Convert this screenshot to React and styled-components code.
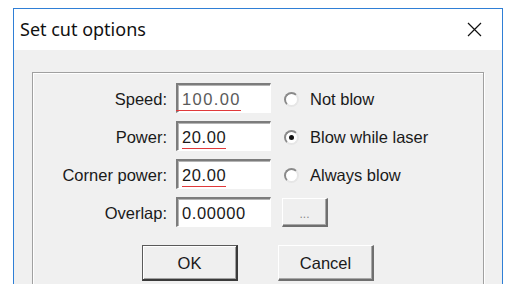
import React from "react";
import styled, { createGlobalStyle } from "styled-components";

const GlobalStyle = createGlobalStyle`
  html, body {
    margin: 0;
    padding: 0;
    background: #ffffff;
    overflow: hidden;
  }
  body {
    font-family: "Liberation Sans", Arial, sans-serif;
  }
`;

const rows = [
  { label: "Speed:", value: "100.00", faded: true, squiggle: true, radio: "Not blow" },
  { label: "Power:", value: "20.00", squiggle: true, radio: "Blow while laser", checked: true },
  { label: "Corner power:", value: "20.00", squiggle: true, radio: "Always blow" },
  { label: "Overlap:", value: "0.00000", more: true },
];

export default function App() {
  return (
    <>
      <GlobalStyle />
      <Window>
        <TitleBar>
          <Title>Set cut options</Title>
          <CloseButton>
            <svg width="15" height="15" viewBox="0 0 15 15">
              <path d="M1 1 L14 14 M14 1 L1 14" stroke="#111" strokeWidth="1.2" fill="none" />
            </svg>
          </CloseButton>
        </TitleBar>

        <Content>
          <GroupBox>
            <Form>
              {rows.map((row) => (
                <React.Fragment key={row.label}>
                  <Label>{row.label}</Label>
                  <Field>
                    <Value faded={row.faded} squiggle={row.squiggle}>
                      {row.value}
                    </Value>
                  </Field>
                  {row.more ? (
                    <SmallButton>...</SmallButton>
                  ) : (
                    <Radio>
                      <RadioCircle checked={row.checked} />
                      <span>{row.radio}</span>
                    </Radio>
                  )}
                </React.Fragment>
              ))}
            </Form>

            <ButtonRow>
              <Button isDefault>OK</Button>
              <Button>Cancel</Button>
            </ButtonRow>
          </GroupBox>
        </Content>
      </Window>
    </>
  );
}

const Window = styled.div`
  margin: 8px 0 0 13px;
  width: 488px;
  height: 276px;
  overflow: hidden;
  border: 1px solid #2f7fd6;
  border-bottom: none;
  background: #f0f0f0;
`;

const TitleBar = styled.div`
  height: 41px;
  background: #ffffff;
  display: flex;
  align-items: center;
  justify-content: space-between;
  padding: 0 20px 0 6px;
`;

const Title = styled.span`
  font-family: "Noto Sans", "Open Sans", sans-serif;
  font-size: 18px;
  color: #111;
  margin-top: -1px;
`;

const CloseButton = styled.span`
  display: flex;
  align-items: center;
  margin-top: -1px;
`;

const Content = styled.div`
  padding: 22px 18px 0 18px;
`;

const GroupBox = styled.div`
  height: 230px;
  border: 1px solid #a0a0a0;
  box-shadow: inset 1px 1px #ffffff, 1px 1px #ffffff;
  padding-top: 10px;
`;

const Form = styled.div`
  display: grid;
  grid-template-columns: 134px 95px 1fr;
  grid-auto-rows: 30px;
  column-gap: 9px;
  row-gap: 8px;
  align-items: center;
`;

const Label = styled.span`
  justify-self: end;
  font-size: 16.5px;
  color: #1a1a1a;
  padding-top: 3px;
`;

const Field = styled.div`
  height: 30px;
  box-sizing: border-box;
  background: #ffffff;
  border-style: solid;
  border-width: 2px 1px 1px 2px;
  border-color: #7c7c7c #ffffff #ffffff #7c7c7c;
  box-shadow: inset 1px 1px #b4b4b4;
  display: flex;
  align-items: center;
  padding-left: 4px;
`;

const Value = styled.span`
  position: relative;
  font-size: 16.5px;
  color: ${({ faded }) => (faded ? "#5a5a5a" : "#1a1a1a")};
  letter-spacing: ${({ faded }) => (faded ? "1.4px" : "0.6px")};
  padding-top: 1px;

  &::after {
    content: "";
    display: ${({ squiggle }) => (squiggle ? "block" : "none")};
    position: absolute;
    left: ${({ faded }) => (faded ? "-6px" : "0")};
    right: 0;
    bottom: -2px;
    border-bottom: 1.5px solid #e0393a;
  }
`;

const Radio = styled.label`
  display: flex;
  align-items: center;
  gap: 11px;
  margin-left: 4px;
  padding-top: 3px;
  font-size: 16.5px;
  color: #1a1a1a;
`;

const RadioCircle = styled.span`
  position: relative;
  width: 15px;
  height: 15px;
  box-sizing: border-box;
  border-radius: 50%;
  background: #ffffff;
  border: 2px solid;
  border-color: #8a8a8a #e6e6e6 #e6e6e6 #8a8a8a;

  &::after {
    content: "";
    display: ${({ checked }) => (checked ? "block" : "none")};
    position: absolute;
    left: 3px;
    top: 3px;
    width: 5px;
    height: 5px;
    border-radius: 50%;
    background: #111;
  }
`;

const bevel = `
  background: #efefef;
  box-sizing: border-box;
  font-family: "Liberation Sans", Arial, sans-serif;
  color: #1a1a1a;
  display: flex;
  align-items: center;
  justify-content: center;
`;

const SmallButton = styled.div`
  ${bevel}
  width: 46px;
  height: 29px;
  margin-left: 2px;
  border-style: solid;
  border-width: 1px 2px 2px 1px;
  border-color: #ffffff #6f6f6f #6f6f6f #ffffff;
  box-shadow: inset -1px -1px #a8a8a8;
  font-size: 12px;
  color: #8a8a8a;
  padding-top: 4px;
`;

const ButtonRow = styled.div`
  display: flex;
  justify-content: center;
  gap: 40px;
  margin-top: 18px;
`;

const Button = styled.div`
  ${bevel}
  width: 96px;
  height: 36px;
  font-size: 16.5px;
  border-style: solid;
  border-width: 1px 2px 2px 1px;
  border-color: ${({ isDefault }) =>
    isDefault ? "#5a5a5a #3a3a3a #3a3a3a #5a5a5a" : "#ffffff #6f6f6f #6f6f6f #ffffff"};
  box-shadow: ${({ isDefault }) =>
    isDefault ? "inset 1px 1px #ffffff, inset -1px -1px #a0a0a0" : "inset -1px -1px #a8a8a8"};
  padding-top: 2px;
`;
